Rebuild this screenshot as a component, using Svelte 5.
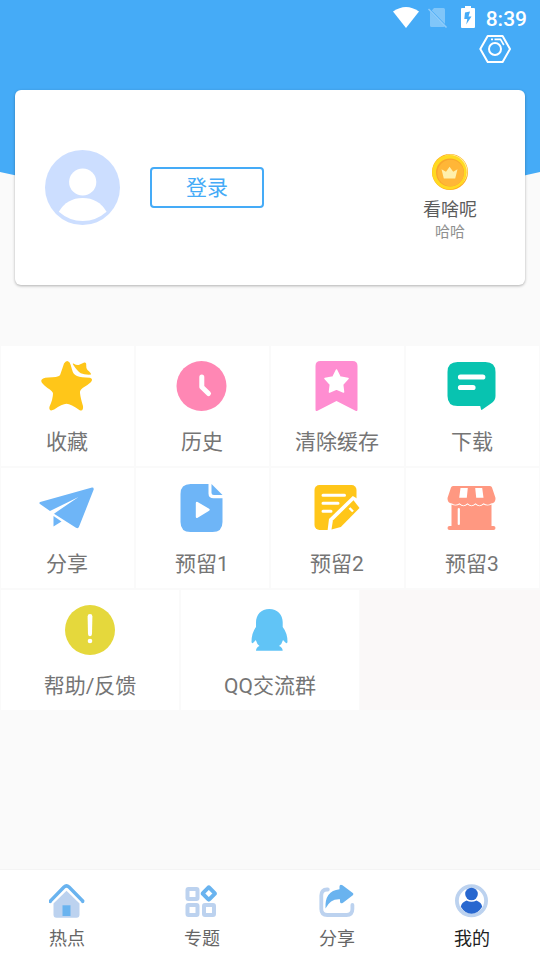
<script lang="ts">
  type Entry = { id: string; label: string };

  const entries: Entry[] = [
    { id: 'favorite', label: '收藏' },
    { id: 'history', label: '历史' },
    { id: 'cache', label: '清除缓存' },
    { id: 'download', label: '下载' },
    { id: 'plane', label: '分享' },
    { id: 'video', label: '预留1' },
    { id: 'note', label: '预留2' },
    { id: 'shop', label: '预留3' },
  ];

  const support: Entry[] = [
    { id: 'help', label: '帮助/反馈' },
    { id: 'qq', label: 'QQ交流群' },
  ];

  const tabs: Entry[] = [
    { id: 'home', label: '热点' },
    { id: 'topics', label: '专题' },
    { id: 'share', label: '分享' },
    { id: 'mine', label: '我的' },
  ];

  let active = $state('mine');
</script>

{#snippet icon(id: string)}
  <svg class="tile-icon" viewBox="0 0 60 60" aria-hidden="true">
    {#if id === 'favorite'}
      <g fill="#ffc619">
        <path d="M27 7.6Q29.8 3 32.6 6.6Q34 9 35 13.5Q36.2 18.5 40 20Q44 21.6 53 21.7Q56.6 23 53.8 26.2Q50.5 29.2 46 31.8Q42.6 34 43 37Q43.5 42 46 50Q46.6 55.5 42.7 54.2Q34 48 29.5 47.8Q25 48 17.2 53.6Q11.8 56 12.4 51Q16 43 16 37.5Q15.8 35.4 10.5 32Q4.2 27.4 4.2 24.8Q4.6 21.8 11.2 21.4Q20.5 21.4 23 19.2Q24.4 15.5 27 7.6Z" />
        <path d="M36.4 7.4Q40 9.6 42.3 8.7L47.2 6.6Q49.6 6.2 49.2 9.3Q49 12.6 50.5 14Q54.4 17 54 18.6Q47.5 19 43.8 17.2Q40.4 15.4 36 8.6Q35.4 7.2 36.4 7.4Z" />
      </g>
    {:else if id === 'history'}
      <circle cx="29.5" cy="30" r="25" fill="#ff87b4" />
      <path d="M29.8 21V31L36.5 37.5" fill="none" stroke="#fff" stroke-width="5" stroke-linecap="round" stroke-linejoin="round" />
    {:else if id === 'cache'}
      <path d="M8.5 10Q8.5 5 13.5 5H45.5Q50.5 5 50.5 10V53.5Q50.5 55.8 48.5 54.8L29.5 45L10.5 54.8Q8.5 55.8 8.5 53.5Z" fill="#ff8dd1" />
      <path d="M29.5 14L33 21L41 22.5L35.6 28.5L36.5 36L29.5 33L22.5 36L23.4 28.5L18 22.5L26 21Z" fill="#fff" stroke="#fff" stroke-width="1.6" stroke-linejoin="round" />
    {:else if id === 'download'}
      <path d="M15.5 6H43.5Q53.5 6 53.5 16V40Q53.5 45 49 47.5L40 53.8Q39.2 54.2 39 53.2L38.2 50H15.5Q5.5 50 5.5 40V16Q5.5 6 15.5 6Z" fill="#08c3b0" />
      <path d="M18.5 21H40.8M18.5 31.5H31" stroke="#fff" stroke-width="5.2" stroke-linecap="round" />
    {:else if id === 'plane'}
      <g fill="#6eb5f7">
        <path d="M3.2 23.9L55 9.5Q57.2 9.4 56.6 11.8L42 48.8Q41.2 51 39 49.7L17 35.7L41.5 19L13 33L3 26Q1.6 24.7 3.2 23.9Z" />
        <path d="M16.5 38L24.5 43.5L16.5 48.4Z" />
      </g>
    {:else if id === 'video'}
      <g fill="#6eb5f7">
        <path d="M18.5 6H36.5V15.5Q36.5 20.3 41.5 20.3H50.5V44Q50.5 54 40.5 54H18.5Q8.5 54 8.5 44V16Q8.5 6 18.5 6Z" />
        <path d="M39.5 6L50.5 17H42Q39.5 17 39.5 14.5Z" />
      </g>
      <path d="M25 25L36.5 31.7L25 38.8Z" fill="#fff" stroke="#fff" stroke-width="2.4" stroke-linejoin="round" />
    {:else if id === 'note'}
      <rect x="7.5" y="7" width="42" height="45" rx="5" fill="#ffc619" />
      <path d="M16 17.3H37.5M16 25.3H31M16 33.3H24" stroke="#fff" stroke-width="3" stroke-linecap="round" />
      <path d="M45.8 18L22 41L20.5 53H56V24Z" fill="#fff" />
      <path d="M46.5 22.2L52.5 30L33.8 49L24.5 51.5L25.9 42.5Z" fill="#ffc619" />
      <path d="M42.5 30L46 33.5" stroke="#fff" stroke-width="2.4" />
    {:else if id === 'shop'}
      <g fill="#ff9881">
        <path d="M11 8H48Q49.5 8 50 9.5L53.5 20Q53.8 25 49 25.5Q45.5 28 41.5 25.3Q37.5 29.5 33.5 25.3Q29.5 29.5 25.5 25.3Q21.5 29.5 17.5 25.3Q14 28 10 25.5Q5.2 25 5.5 20L9 9.5Q9.5 8 11 8Z" />
        <path d="M9.5 26.6Q14 28.4 17.5 26.4Q21.5 29.9 25.5 26.4Q29.5 29.9 33.5 26.4Q37.5 29.9 41.5 26.4Q45 28.4 49.5 26.6V48H51.5Q53.5 48 53.5 50T51.5 52H7.5Q5.5 52 5.5 50T7.5 48H9.5Z" />
      </g>
      <path d="M18.5 10H25.8L24.8 19.7H17.2ZM33.2 10H40.2L41.5 19.7H34.2Z" fill="#fff" />
      <path d="M16.8 31V46" stroke="#fff" stroke-width="2.2" stroke-linecap="round" />
    {:else if id === 'help'}
      <circle cx="30" cy="30" r="25" fill="#e5d83c" />
      <path d="M30 14Q32.4 14 32.4 16.4L32 34Q31.8 36.3 30 36.3T28 34L27.6 16.4Q27.6 14 30 14Z" fill="#fff" />
      <circle cx="30" cy="41" r="2.3" fill="#fff" />
    {:else if id === 'qq'}
      <path d="M29.3 9C21 9 15.8 15 16 23V27Q11.5 33 11.5 42Q12 45 15.8 40Q16.8 44 19.5 46Q16 47.5 16 50.7H42.7Q42.7 47.5 39 46Q42 44 43 40Q47 45 47.5 42Q47.5 33 42.7 27V23C43 15 37.6 9 29.3 9Z" fill="#61c4f6" />
    {/if}
  </svg>
{/snippet}

{#snippet tabIcon(id: string)}
  <svg class="tab-icon" viewBox="0 0 36 36" aria-hidden="true">
    {#if id === 'home'}
      <path d="M17.5 7.7L30.5 20.5V31.5Q30.5 34.7 27.5 34.7H7.5Q4.5 34.7 4.5 31.5V20.5Z" fill="#bcd2ef" />
      <rect x="13.5" y="22.3" width="8" height="10.7" fill="#69b3ef" />
      <path d="M1.3 18.6V18L15 4Q17.5 1.7 20 4L33.7 18V18.6" fill="none" stroke="#69b3ef" stroke-width="3.4" stroke-linecap="round" />
    {:else if id === 'topics'}
      <g fill="none" stroke-width="4">
        <g stroke="#bcd2ef">
          <rect x="3.5" y="6" width="10" height="10" rx="1" />
          <rect x="3.5" y="22" width="10" height="10" rx="1" />
          <rect x="20" y="22" width="10" height="10" rx="1" />
        </g>
        <rect x="20.3" y="6" width="9" height="9" rx="1" transform="rotate(45 24.8 10.5)" stroke="#69b3ef" />
      </g>
    {:else if id === 'share'}
      <path d="M8.8 6.5H8Q2.3 6.5 2.3 12.5V26Q2.3 32 8.3 32H27.5Q33.4 32 33.4 26V22" fill="none" stroke="#bcd2ef" stroke-width="3.8" stroke-linecap="round" />
      <path d="M6.5 25.5Q5.5 7.8 20.5 6.2V3.5Q20.7 .8 23.5 2.2L33.8 10Q35.2 11 33.8 12.2L24 19.8Q21.3 21.4 21 18.5V16.3Q11.5 15.5 6.5 25.5Z" fill="#69b3ef" />
    {:else if id === 'mine'}
      <circle cx="17.5" cy="17.8" r="14.6" fill="none" stroke="#bcd2ef" stroke-width="3.8" />
      <circle cx="17.5" cy="11" r="6.3" fill="#2867cf" />
      <path d="M12.5 17.5Q17.5 20 22.5 17.5Q27.5 19.5 28.2 23.7Q24 30.7 17.5 30.7T6.8 23.7Q7.5 19.5 12.5 17.5Z" fill="#2867cf" />
    {/if}
  </svg>
{/snippet}

<div class="page">
  <header>
    <svg class="backdrop" viewBox="0 0 540 210" preserveAspectRatio="none" aria-hidden="true">
      <path d="M0 0H540V172Q270 234 0 172Z" fill="#45abf7" />
    </svg>

    <div class="status">
      <svg width="26" height="22" viewBox="0 0 26 22" aria-hidden="true">
        <path d="M0 5.5Q13-3.5 26 5.5L13 22Z" fill="#fff" />
      </svg>
      <svg width="20" height="22" viewBox="0 0 20 22" aria-hidden="true">
        <path d="M6 2H15.5Q17 2 17 3.5V18L3.8 4.4ZM2 5.8L16.6 20.6Q16.2 21 15.5 21H3.5Q2 21 2 19.5Z" fill="#fff" opacity=".32" />
        <path d="M.5 3L18.5 21.5" stroke="#fff" stroke-width="1.5" opacity=".4" />
      </svg>
      <svg width="14" height="22" viewBox="0 0 14 22" aria-hidden="true">
        <path d="M4 0H10V2H13Q14 2 14 3V21Q14 22 13 22H1Q0 22 0 21V3Q0 2 1 2H4Z" fill="#fff" />
        <path d="M9 5.5L4 6.5L3.3 13H6.3L5.2 18.5L10.5 10.5H7.5Z" fill="#45abf7" />
      </svg>
      <time>8:39</time>
    </div>

    <div class="toolbar">
      <button class="settings" aria-label="设置">
        <svg width="32" height="28" viewBox="0 2 32 28" fill="none" stroke="#fff" stroke-width="2" aria-hidden="true">
          <path d="M1.3 16L8.7 3H23.6L31 16L23.6 29H8.7Z" stroke-linejoin="round" />
          <circle cx="16" cy="16" r="6" />
          <path d="M12 6.4H14M15.5 6.4H21.5L24.8 12" stroke-width="1.6" />
        </svg>
      </button>
    </div>

    <section class="card">
      <svg class="avatar" viewBox="0 0 75 75" aria-hidden="true">
        <circle cx="37.5" cy="37.5" r="37.5" fill="#ccdeff" />
        <circle cx="37.7" cy="32" r="13.6" fill="#fff" />
        <path d="M13.8 61.7Q22 48 37.7 48T61.6 61.7Q51 71 37.7 71T13.8 61.7Z" fill="#fff" />
      </svg>
      <button class="login">登录</button>
      <div class="coin">
        <svg width="36" height="36" viewBox="0 0 36 36" aria-hidden="true">
          <circle cx="18" cy="18" r="18" fill="#ffac1d" />
          <circle cx="18.6" cy="17.4" r="16.8" fill="#fff0a0" />
          <circle cx="17.4" cy="18.2" r="17.2" fill="#ffda22" />
          <circle cx="18" cy="18.5" r="14" fill="#f9a52d" />
          <circle cx="18.6" cy="19" r="13.2" fill="#ffb637" />
          <path d="M9.5 15.2L14 17.7L17.6 12.8L21.2 17.7L25.5 15.2L23.2 24.5H11.8Z" fill="#fff0ac" />
        </svg>
        <strong>看啥呢</strong>
        <span>哈哈</span>
      </div>
    </section>
  </header>

  <main>
    <div class="grid">
      {#each entries as entry (entry.id)}
        <button class="tile">
          {@render icon(entry.id)}
          {entry.label}
        </button>
      {/each}
    </div>
    <div class="grid support">
      {#each support as entry (entry.id)}
        <button class="tile">
          {@render icon(entry.id)}
          {entry.label}
        </button>
      {/each}
    </div>
  </main>

  <nav>
    {#each tabs as tab (tab.id)}
      <button class="tab" class:active={active === tab.id} onclick={() => (active = tab.id)}>
        {@render tabIcon(tab.id)}
        {tab.label}
      </button>
    {/each}
  </nav>
</div>

<style>
  :global(body) {
    margin: 0;
    background: #fafafa;
  }

  .page {
    display: flex;
    flex-direction: column;
    min-height: 100vh;
    font-family: Roboto, 'Noto Sans CJK SC', sans-serif;
    color: #757575;
  }

  button {
    margin: 0;
    padding: 0;
    border: 0;
    background: none;
    font: inherit;
    color: inherit;
    cursor: pointer;
  }

  svg {
    display: block;
    flex: none;
  }

  header {
    position: relative;
  }

  .backdrop {
    position: absolute;
    top: 0;
    left: 0;
    z-index: -1;
    width: 100%;
    height: 210px;
  }

  .status {
    display: flex;
    align-items: center;
    justify-content: flex-end;
    height: 34px;
    padding-right: 13px;
  }

  .status svg + svg {
    margin-left: 9px;
  }

  .status svg + svg + svg {
    margin-left: 13px;
  }

  time {
    margin-left: 11px;
    padding-top: 3px;
    color: #fff;
    font-size: 21px;
    font-weight: 500;
    line-height: 26px;
  }

  .toolbar {
    display: flex;
    align-items: flex-start;
    justify-content: flex-end;
    box-sizing: border-box;
    height: 56px;
    padding: 1px 29px 0 0;
  }

  .card {
    display: flex;
    align-items: center;
    box-sizing: border-box;
    min-height: 195px;
    margin: 0 15px;
    padding: 0 30px;
    background: #fff;
    border-radius: 6px;
    box-shadow: 0 1px 3px rgba(0, 0, 0, 0.3);
  }

  .avatar {
    width: 75px;
    height: 75px;
  }

  .login {
    box-sizing: border-box;
    width: 114px;
    height: 41px;
    margin-left: 30px;
    padding-top: 1px;
    border: 2px solid #45abf7;
    border-radius: 4px;
    color: #45abf7;
    font-size: 21px;
    line-height: 36px;
  }

  .coin {
    display: flex;
    flex-direction: column;
    align-items: center;
    width: 90px;
    margin-left: auto;
    padding-top: 21px;
  }

  .coin strong {
    margin-top: 7px;
    color: #5c5c5c;
    font-size: 18px;
    font-weight: 400;
    line-height: 25px;
  }

  .coin span {
    color: #909090;
    font-size: 15px;
    line-height: 20px;
  }

  main {
    flex: 1;
    padding: 61px 0 32px;
  }

  .grid {
    display: grid;
    grid-template-columns: repeat(4, 1fr);
    gap: 2px;
    padding: 0 1px;
  }

  .support {
    grid-template-columns: repeat(3, 1fr);
    margin-top: 2px;
    background: linear-gradient(to right, #fafafa 66.6%, #faf8f8 66.6%);
  }

  .tile {
    display: flex;
    flex-direction: column;
    align-items: center;
    gap: 11px;
    padding: 10px 1px 9px 0;
    background: #fff;
    font-size: 21px;
    line-height: 30px;
  }

  .support .tile {
    padding-right: 0;
  }

  .tile-icon {
    width: 60px;
    height: 60px;
  }

  nav {
    display: flex;
    background: #fff;
    border-top: 1px solid #f4f4f4;
  }

  .tab {
    display: flex;
    flex: 1;
    flex-direction: column;
    align-items: center;
    gap: 7px;
    padding: 13px 1px 8px 0;
    color: #666;
    font-size: 18px;
    line-height: 26px;
  }

  .tab-icon {
    width: 36px;
    height: 36px;
  }

  .active {
    color: #212121;
  }
</style>
